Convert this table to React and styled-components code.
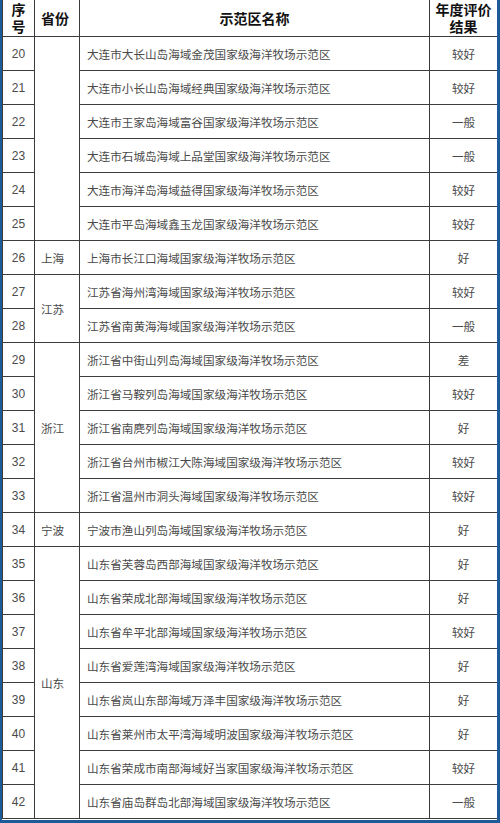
import React from 'react';
import styled, { createGlobalStyle } from 'styled-components';

const GlobalStyle = createGlobalStyle`
  html, body {
    margin: 0;
    padding: 0;
    background: #ffffff;
  }
`;

const StyledFrame = styled.div`
  width: 500px;
  height: 823px;
  box-sizing: border-box;
  border-left: 2px solid #1d5b98;
  border-right: 3px solid #1d5b98;
  border-bottom: 3px solid #1d5b98;
  overflow: hidden;
  background: #ffffff;
`;

const StyledTable = styled.table`
  width: 495px;
  table-layout: fixed;
  border-collapse: collapse;
  font-family: 'Liberation Sans', 'Noto Sans CJK SC', sans-serif;
`;

const StyledHeadCell = styled.th`
  height: 36px;
  padding: 0 1px;
  border: 1px solid #3c3c3c;
  border-top: none;
  font-family: 'Noto Sans CJK SC', sans-serif;
  font-size: 14px;
  font-weight: 700;
  line-height: 18px;
  color: #111;
  text-align: ${({ align }) => align || 'center'};
  padding-left: ${({ indent }) => indent || 1}px;
`;

const StyledHeadLine = styled.span`
  display: block;
  height: 17px;
  line-height: 17px;
`;

const StyledCell = styled.td`
  height: 33px;
  padding: 0;
  border: 1px solid #3c3c3c;
  font-size: ${({ cjk }) => (cjk ? 11.6 : 12)}px;
  color: #4a4a4a;
  vertical-align: middle;
  text-align: ${({ align }) => align || 'center'};
  padding-left: ${({ indent }) => indent || 0}px;
  font-family: ${({ cjk }) =>
    cjk ? "'Noto Sans CJK SC', sans-serif" : "'Liberation Sans', 'Noto Sans CJK SC', sans-serif"};
`;

const rows = [
  [20, '大连市大长山岛海域金茂国家级海洋牧场示范区', '较好'],
  [21, '大连市小长山岛海域经典国家级海洋牧场示范区', '较好'],
  [22, '大连市王家岛海域富谷国家级海洋牧场示范区', '一般'],
  [23, '大连市石城岛海域上品堂国家级海洋牧场示范区', '一般'],
  [24, '大连市海洋岛海域益得国家级海洋牧场示范区', '较好'],
  [25, '大连市平岛海域鑫玉龙国家级海洋牧场示范区', '较好'],
  [26, '上海市长江口海域国家级海洋牧场示范区', '好'],
  [27, '江苏省海州湾海域国家级海洋牧场示范区', '较好'],
  [28, '江苏省南黄海海域国家级海洋牧场示范区', '一般'],
  [29, '浙江省中街山列岛海域国家级海洋牧场示范区', '差'],
  [30, '浙江省马鞍列岛海域国家级海洋牧场示范区', '较好'],
  [31, '浙江省南麂列岛海域国家级海洋牧场示范区', '好'],
  [32, '浙江省台州市椒江大陈海域国家级海洋牧场示范区', '较好'],
  [33, '浙江省温州市洞头海域国家级海洋牧场示范区', '较好'],
  [34, '宁波市渔山列岛海域国家级海洋牧场示范区', '好'],
  [35, '山东省芙蓉岛西部海域国家级海洋牧场示范区', '好'],
  [36, '山东省荣成北部海域国家级海洋牧场示范区', '好'],
  [37, '山东省牟平北部海域国家级海洋牧场示范区', '较好'],
  [38, '山东省爱莲湾海域国家级海洋牧场示范区', '好'],
  [39, '山东省岚山东部海域万泽丰国家级海洋牧场示范区', '好'],
  [40, '山东省莱州市太平湾海域明波国家级海洋牧场示范区', '好'],
  [41, '山东省荣成市南部海域好当家国家级海洋牧场示范区', '较好'],
  [42, '山东省庙岛群岛北部海域国家级海洋牧场示范区', '一般'],
];

// province cells keyed by the first row number they span
const provinces = {
  20: { name: '', span: 6 },
  26: { name: '上海', span: 1 },
  27: { name: '江苏', span: 2 },
  29: { name: '浙江', span: 5 },
  34: { name: '宁波', span: 1 },
  35: { name: '山东', span: 8 },
};

const App = () => (
  <StyledFrame>
    <GlobalStyle />
    <StyledTable>
      <colgroup>
        <col style={{ width: 32 }} />
        <col style={{ width: 45 }} />
        <col style={{ width: 350 }} />
        <col style={{ width: 68 }} />
      </colgroup>
      <thead>
        <tr>
          <StyledHeadCell>
            <StyledHeadLine>序</StyledHeadLine>
            <StyledHeadLine>号</StyledHeadLine>
          </StyledHeadCell>
          <StyledHeadCell align="left" indent={6}>省份</StyledHeadCell>
          <StyledHeadCell>示范区名称</StyledHeadCell>
          <StyledHeadCell>
            <StyledHeadLine>年度评价</StyledHeadLine>
            <StyledHeadLine>结果</StyledHeadLine>
          </StyledHeadCell>
        </tr>
      </thead>
      <tbody>
        {rows.map(([num, name, result]) => {
          const province = provinces[num];
          return (
            <tr key={num}>
              <StyledCell>{num}</StyledCell>
              {province && (
                <StyledCell cjk align="left" indent={6} rowSpan={province.span}>
                  {province.name}
                </StyledCell>
              )}
              <StyledCell cjk align="left" indent={7}>
                {name}
              </StyledCell>
              <StyledCell cjk>{result}</StyledCell>
            </tr>
          );
        })}
      </tbody>
    </StyledTable>
  </StyledFrame>
);

export default App;
